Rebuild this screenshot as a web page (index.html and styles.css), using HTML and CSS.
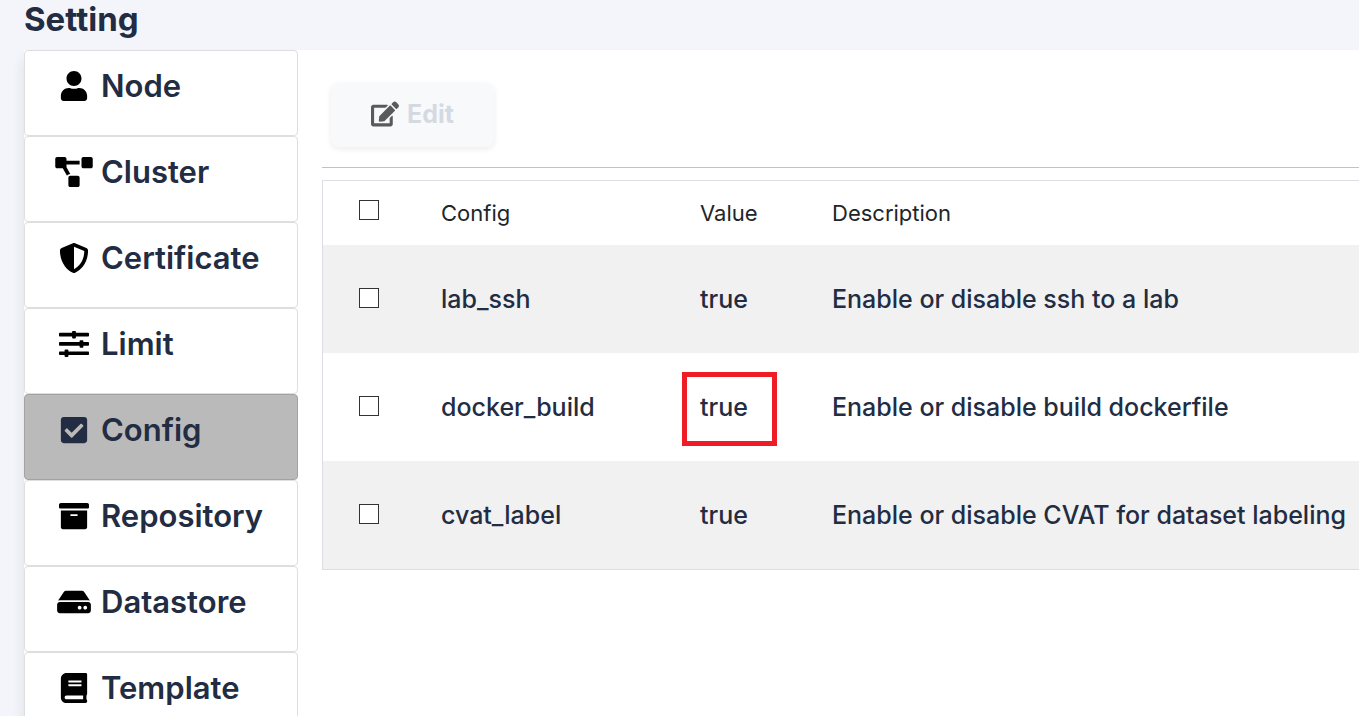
FILE: index.html
```html
<!DOCTYPE html>
<html lang="en">
<head>
<meta charset="utf-8">
<title>Setting</title>
<link rel="stylesheet" href="styles.css">
</head>
<body>
<div class="page">
  <h1 class="page-title">Setting</h1>
  <div class="panel">
    <nav class="sidebar" aria-label="Setting">
      <a class="nav-item" href="#node"><span class="nav-icon"><svg width="28" height="30" viewBox="0 0 448 512"><path d="M224 256c70.7 0 128-57.3 128-128S294.7 0 224 0 96 57.3 96 128s57.3 128 128 128zm89.6 32h-16.7c-22.2 10.2-46.9 16-72.9 16s-50.6-5.8-72.9-16h-16.7C60.2 288 0 348.2 0 422.4V464c0 26.5 21.5 48 48 48h352c26.5 0 48-21.5 48-48v-41.6c0-74.2-60.2-134.4-134.4-134.4z"/></svg></span>Node</a>
      <a class="nav-item" href="#cluster"><span class="nav-icon"><svg width="38" height="30" viewBox="0 0 640 512"><path d="M384 320H256c-17.67 0-32 14.33-32 32v128c0 17.67 14.33 32 32 32h128c17.67 0 32-14.33 32-32V352c0-17.67-14.33-32-32-32zM192 32c0-17.67-14.33-32-32-32H32C14.33 0 0 14.33 0 32v128c0 17.67 14.33 32 32 32h95.72l73.16 128.04C211.98 300.98 232.4 288 256 288h.28L192 175.51V128h224V64H192V32zM608 0H480c-17.67 0-32 14.33-32 32v128c0 17.67 14.33 32 32 32h128c17.67 0 32-14.33 32-32V32c0-17.67-14.33-32-32-32z"/></svg></span>Cluster</a>
      <a class="nav-item" href="#certificate"><span class="nav-icon"><svg width="30" height="30" viewBox="0 0 512 512"><path d="M466.5 83.7l-192-80a48.15 48.15 0 0 0-36.9 0l-192 80C27.7 91.1 16 108.6 16 128c0 198.5 114.5 335.7 221.5 380.3 11.8 4.9 25.1 4.9 36.9 0C360.1 472.6 496 349.3 496 128c0-19.4-11.7-36.9-29.5-44.3zM256.1 446.3l-.1-381 175.9 73.3c-3.3 151.4-82.1 261.1-175.8 307.7z"/></svg></span>Certificate</a>
      <a class="nav-item" href="#limit"><span class="nav-icon"><svg width="30" height="30" viewBox="0 0 30 30"><rect y="3.8" width="30" height="3.7" rx=".8"/><rect y="13.1" width="30" height="3.7" rx=".8"/><rect y="22.4" width="30" height="3.7" rx=".8"/><rect x="13.1" y="1.9" width="3.8" height="7.5" rx=".9"/><rect x="20.6" y="11.2" width="3.8" height="7.5" rx=".9"/><rect x="5.6" y="20.5" width="3.8" height="7.5" rx=".9"/></svg></span>Limit</a>
      <a class="nav-item active" href="#config" aria-current="page"><span class="nav-icon"><svg width="28" height="30" viewBox="0 0 448 512"><path d="M400 480H48c-26.51 0-48-21.49-48-48V80c0-26.51 21.49-48 48-48h352c26.51 0 48 21.49 48 48v352c0 26.51-21.49 48-48 48zm-204.686-98.059l184-184c6.248-6.248 6.248-16.379 0-22.627l-22.627-22.627c-6.248-6.248-16.379-6.249-22.628 0L184 302.745l-70.059-70.059c-6.248-6.248-16.379-6.248-22.628 0l-22.627 22.627c-6.248 6.248-6.248 16.379 0 22.627l104 104c6.249 6.25 16.379 6.25 22.628.001z"/></svg></span>Config</a>
      <a class="nav-item" href="#repository"><span class="nav-icon"><svg width="30" height="30" viewBox="0 0 512 512"><path d="M32 448c0 17.7 14.3 32 32 32h384c17.7 0 32-14.3 32-32V160H32v288zm160-212c0-6.6 5.4-12 12-12h104c6.6 0 12 5.4 12 12v8c0 6.6-5.4 12-12 12H204c-6.6 0-12-5.4-12-12v-8zM480 32H32C14.3 32 0 46.3 0 64v48c0 8.8 7.2 16 16 16h480c8.8 0 16-7.2 16-16V64c0-17.7-14.3-32-32-32z"/></svg></span>Repository</a>
      <a class="nav-item" href="#datastore"><span class="nav-icon"><svg width="34" height="30" viewBox="0 0 576 512"><path d="M576 304v96c0 26.51-21.49 48-48 48H48c-26.51 0-48-21.49-48-48v-96c0-26.51 21.49-48 48-48h480c26.51 0 48 21.49 48 48zm-48-80a79.557 79.557 0 0 1 30.777 6.165L462.25 85.374A48.003 48.003 0 0 0 422.311 64H153.689a48 48 0 0 0-39.938 21.374L17.223 230.165A79.557 79.557 0 0 1 48 224h480zm-48 96c-17.673 0-32 14.327-32 32s14.327 32 32 32 32-14.327 32-32-14.327-32-32-32zm-96 0c-17.673 0-32 14.327-32 32s14.327 32 32 32 32-14.327 32-32-14.327-32-32-32z"/></svg></span>Datastore</a>
      <a class="nav-item" href="#template"><span class="nav-icon"><svg width="28" height="30" viewBox="0 0 448 512"><path d="M448 360V24c0-13.3-10.7-24-24-24H96C43 0 0 43 0 96v320c0 53 43 96 96 96h328c13.3 0 24-10.7 24-24v-16c0-7.5-3.5-14.3-8.9-18.7-4.2-15.4-4.2-59.3 0-74.7 5.4-4.3 8.9-11.1 8.9-18.6zM128 134c0-3.3 2.7-6 6-6h212c3.3 0 6 2.7 6 6v20c0 3.3-2.7 6-6 6H134c-3.3 0-6-2.7-6-6v-20zm0 64c0-3.3 2.7-6 6-6h212c3.3 0 6 2.7 6 6v20c0 3.3-2.7 6-6 6H134c-3.3 0-6-2.7-6-6v-20zm253.4 250H96c-17.7 0-32-14.3-32-32 0-17.6 14.4-32 32-32h285.4c-1.9 17.1-1.9 46.9 0 64z"/></svg></span>Template</a>
    </nav>
    <main class="content">
      <div class="toolbar">
        <button class="edit-button" type="button" disabled><svg width="28" height="26" viewBox="0 0 576 512"><path d="M402.6 83.2l90.2 90.2c3.8 3.8 3.8 10 0 13.8L274.4 405.6l-92.8 10.3c-12.4 1.4-22.9-9.1-21.5-21.5l10.3-92.8L388.8 83.2c3.8-3.8 10-3.8 13.8 0zm162-22.9l-48.8-48.8c-15.2-15.2-39.9-15.2-55.2 0l-35.4 35.4c-3.8 3.8-3.8 10 0 13.8l90.2 90.2c3.8 3.8 10 3.8 13.8 0l35.4-35.4c15.2-15.3 15.2-40 0-55.2zM384 346.2V448H64V128h229.8c3.2 0 6.2-1.3 8.5-3.5l40-40c7.6-7.6 2.2-20.5-8.5-20.5H48C21.5 64 0 85.5 0 112v352c0 26.5 21.5 48 48 48h352c26.5 0 48-21.5 48-48V306.2c0-10.7-12.9-16-20.5-8.5l-40 40c-2.2 2.3-3.5 5.3-3.5 8.5z"/></svg>Edit</button>
      </div>
      <table class="config-table">
        <colgroup><col class="col-check"><col class="col-config"><col class="col-value"><col></colgroup>
        <thead>
          <tr><th scope="col"><input class="check" type="checkbox" aria-label="Select all"></th><th scope="col">Config</th><th scope="col">Value</th><th scope="col">Description</th></tr>
        </thead>
        <tbody>
          <tr><td><input class="check" type="checkbox" aria-labelledby="lab-ssh"></td><td id="lab-ssh">lab_ssh</td><td>true</td><td>Enable or disable ssh to a lab</td></tr>
          <tr><td><input class="check" type="checkbox" aria-labelledby="docker-build"></td><td id="docker-build">docker_build</td><td><span class="marked">true</span></td><td>Enable or disable build dockerfile</td></tr>
          <tr><td><input class="check" type="checkbox" aria-labelledby="cvat-label"></td><td id="cvat-label">cvat_label</td><td>true</td><td>Enable or disable CVAT for dataset labeling</td></tr>
        </tbody>
      </table>
    </main>
  </div>
</div>
</body>
</html>
```
FILE: styles.css
```css
*,
*::after {
  box-sizing: border-box;
}

body {
  margin: 0;
  background: #f4f5fa;
  color: #222c42;
  font-family: Inter, "Open Sans", sans-serif;
}

.page {
  display: flex;
  flex-direction: column;
  height: 100vh;
  padding-left: 24px;
  overflow: hidden;
}

.page-title {
  margin: 0;
  padding-bottom: 12px;
  font-size: 33px;
  font-weight: 700;
  line-height: 38px;
}

.panel {
  display: flex;
  flex: 1 0 auto;
  background: #fff;
  box-shadow: 0 10px 12px rgba(34, 44, 66, 0.1);
}

.sidebar {
  flex: none;
  width: 274px;
}

.nav-item {
  display: flex;
  gap: 8px;
  padding: 16px 0 30px 30px;
  border: 1px solid #dedede;
  border-radius: 4px;
  background: #fff;
  color: #222c42;
  font-size: 31px;
  font-weight: 600;
  line-height: 38px;
  text-decoration: none;
}

.nav-icon {
  display: flex;
  flex: none;
  align-items: center;
  justify-content: center;
  width: 38px;
  height: 38px;
  color: #000;
}

.nav-item.active {
  border-color: #a2a2a2;
  background: #bababa;
}

.active .nav-icon {
  color: #222c42;
}

svg {
  display: block;
  fill: currentColor;
}

.content {
  flex: 1;
  min-width: 0;
  padding: 33px 0 0 24px;
}

.toolbar {
  margin-bottom: 12px;
  padding: 0 0 20px 9px;
  border-bottom: 1px solid #bfc1cf;
}

.edit-button {
  display: flex;
  align-items: center;
  gap: 8px;
  height: 64px;
  padding: 0 40px 2px;
  border: 0;
  border-radius: 8px;
  background: #f8f9fb;
  box-shadow: 0 2px 6px rgba(0, 0, 0, 0.08);
  color: #d5d9e2;
  font-family: inherit;
  font-size: 25px;
  font-weight: 700;
}

.edit-button svg {
  color: #5a5a5a;
}

.config-table {
  width: 100%;
  border: 1px solid #dcdee3;
  border-right: 0;
  border-collapse: separate;
  border-spacing: 0;
  table-layout: fixed;
}

.col-check {
  width: 98px;
}

.col-config {
  width: 259px;
}

.col-value {
  width: 132px;
}

th,
td {
  padding: 0 0 0 20px;
  text-align: left;
  vertical-align: middle;
  white-space: nowrap;
}

th:first-child,
td:first-child {
  padding-left: 36px;
}

th {
  height: 64px;
  color: #212529;
  font-size: 22px;
  font-weight: 400;
}

td {
  height: 108px;
  font-size: 25px;
  font-weight: 500;
}

tbody tr:nth-child(odd) {
  background: #f1f1f1;
}

.check {
  display: block;
  width: 20px;
  height: 20px;
  margin: 0 0 2px;
  border: 1px solid #333;
  background: #fff;
  appearance: none;
}

th .check {
  margin-bottom: 6px;
}

.marked {
  position: relative;
}

/* Red frame drawn over the highlighted value */
.marked::after {
  content: "";
  position: absolute;
  top: -20px;
  left: -18px;
  width: 95px;
  height: 74px;
  border: 5px solid #ee1c25;
}
```
